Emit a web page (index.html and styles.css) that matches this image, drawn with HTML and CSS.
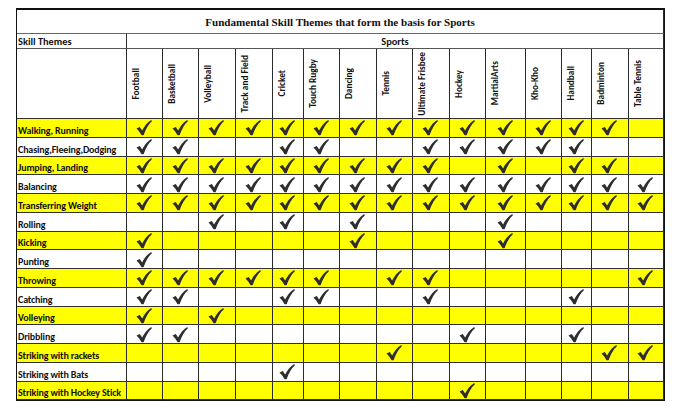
FILE: index.html
```html
<!DOCTYPE html>
<html>
<head>
<meta charset="utf-8">
<title>Fundamental Skill Themes</title>
<link rel="stylesheet" href="styles.css">
</head>
<body>
<svg class="defs" width="0" height="0" aria-hidden="true">
  <symbol id="ck" viewBox="0 0 16 16">
    <path d="M0.5,9.1 C1.5,8.3 2.6,7.8 3.8,7.4 L6.1,10.9 C8.3,6.6 11.3,2.8 15.3,0.4 L15.9,1.7 C12.5,4.8 9.8,9.5 7.7,15.5 C7.0,15.8 6.0,15.8 5.4,15.5 C4.1,13.2 2.5,11 0.5,9.1 Z"/>
  </symbol>
</svg>
<div class="sheet">
  <div class="c title">Fundamental Skill Themes that form the basis for Sports</div>
  <div class="c skill-head">Skill Themes</div>
  <div class="c sports-head">Sports</div>
  <div class="c blank"></div>
  <div class="c sport"><span class="vt">Football</span></div>
  <div class="c sport"><span class="vt">Basketball</span></div>
  <div class="c sport"><span class="vt">Volleyball</span></div>
  <div class="c sport"><span class="vt">Track and Field</span></div>
  <div class="c sport"><span class="vt">Cricket</span></div>
  <div class="c sport"><span class="vt">Touch Rugby</span></div>
  <div class="c sport"><span class="vt">Dancing</span></div>
  <div class="c sport"><span class="vt">Tennis</span></div>
  <div class="c sport"><span class="vt">Ultimate Frisbee</span></div>
  <div class="c sport"><span class="vt">Hockey</span></div>
  <div class="c sport"><span class="vt">MartialArts</span></div>
  <div class="c sport"><span class="vt">Kho-Kho</span></div>
  <div class="c sport"><span class="vt">Handball</span></div>
  <div class="c sport"><span class="vt">Badminton</span></div>
  <div class="c sport"><span class="vt">Table Tennis</span></div>

  <div class="row y">
    <div class="c lab">Walking, Running</div>
    <div class="c k"><svg><use href="#ck"/></svg></div>
    <div class="c k"><svg><use href="#ck"/></svg></div>
    <div class="c k"><svg><use href="#ck"/></svg></div>
    <div class="c k"><svg><use href="#ck"/></svg></div>
    <div class="c k"><svg><use href="#ck"/></svg></div>
    <div class="c k"><svg><use href="#ck"/></svg></div>
    <div class="c k"><svg><use href="#ck"/></svg></div>
    <div class="c k"><svg><use href="#ck"/></svg></div>
    <div class="c k"><svg><use href="#ck"/></svg></div>
    <div class="c k"><svg><use href="#ck"/></svg></div>
    <div class="c k"><svg><use href="#ck"/></svg></div>
    <div class="c k"><svg><use href="#ck"/></svg></div>
    <div class="c k"><svg><use href="#ck"/></svg></div>
    <div class="c k"><svg><use href="#ck"/></svg></div>
    <div class="c k"></div>
  </div>

  <div class="row">
    <div class="c lab">Chasing,Fleeing,Dodging</div>
    <div class="c k"><svg><use href="#ck"/></svg></div>
    <div class="c k"><svg><use href="#ck"/></svg></div>
    <div class="c k"></div>
    <div class="c k"></div>
    <div class="c k"><svg><use href="#ck"/></svg></div>
    <div class="c k"><svg><use href="#ck"/></svg></div>
    <div class="c k"></div>
    <div class="c k"></div>
    <div class="c k"><svg><use href="#ck"/></svg></div>
    <div class="c k"><svg><use href="#ck"/></svg></div>
    <div class="c k"><svg><use href="#ck"/></svg></div>
    <div class="c k"><svg><use href="#ck"/></svg></div>
    <div class="c k"><svg><use href="#ck"/></svg></div>
    <div class="c k"></div>
    <div class="c k"></div>
  </div>

  <div class="row y">
    <div class="c lab">Jumping, Landing</div>
    <div class="c k"><svg><use href="#ck"/></svg></div>
    <div class="c k"><svg><use href="#ck"/></svg></div>
    <div class="c k"><svg><use href="#ck"/></svg></div>
    <div class="c k"><svg><use href="#ck"/></svg></div>
    <div class="c k"><svg><use href="#ck"/></svg></div>
    <div class="c k"><svg><use href="#ck"/></svg></div>
    <div class="c k"><svg><use href="#ck"/></svg></div>
    <div class="c k"><svg><use href="#ck"/></svg></div>
    <div class="c k"><svg><use href="#ck"/></svg></div>
    <div class="c k"></div>
    <div class="c k"><svg><use href="#ck"/></svg></div>
    <div class="c k"></div>
    <div class="c k"><svg><use href="#ck"/></svg></div>
    <div class="c k"><svg><use href="#ck"/></svg></div>
    <div class="c k"></div>
  </div>

  <div class="row">
    <div class="c lab">Balancing</div>
    <div class="c k"><svg><use href="#ck"/></svg></div>
    <div class="c k"><svg><use href="#ck"/></svg></div>
    <div class="c k"><svg><use href="#ck"/></svg></div>
    <div class="c k"><svg><use href="#ck"/></svg></div>
    <div class="c k"><svg><use href="#ck"/></svg></div>
    <div class="c k"><svg><use href="#ck"/></svg></div>
    <div class="c k"><svg><use href="#ck"/></svg></div>
    <div class="c k"><svg><use href="#ck"/></svg></div>
    <div class="c k"><svg><use href="#ck"/></svg></div>
    <div class="c k"><svg><use href="#ck"/></svg></div>
    <div class="c k"><svg><use href="#ck"/></svg></div>
    <div class="c k"><svg><use href="#ck"/></svg></div>
    <div class="c k"><svg><use href="#ck"/></svg></div>
    <div class="c k"><svg><use href="#ck"/></svg></div>
    <div class="c k"><svg><use href="#ck"/></svg></div>
  </div>

  <div class="row y">
    <div class="c lab">Transferring Weight</div>
    <div class="c k"><svg><use href="#ck"/></svg></div>
    <div class="c k"><svg><use href="#ck"/></svg></div>
    <div class="c k"><svg><use href="#ck"/></svg></div>
    <div class="c k"><svg><use href="#ck"/></svg></div>
    <div class="c k"><svg><use href="#ck"/></svg></div>
    <div class="c k"><svg><use href="#ck"/></svg></div>
    <div class="c k"><svg><use href="#ck"/></svg></div>
    <div class="c k"><svg><use href="#ck"/></svg></div>
    <div class="c k"><svg><use href="#ck"/></svg></div>
    <div class="c k"><svg><use href="#ck"/></svg></div>
    <div class="c k"><svg><use href="#ck"/></svg></div>
    <div class="c k"><svg><use href="#ck"/></svg></div>
    <div class="c k"><svg><use href="#ck"/></svg></div>
    <div class="c k"><svg><use href="#ck"/></svg></div>
    <div class="c k"><svg><use href="#ck"/></svg></div>
  </div>

  <div class="row">
    <div class="c lab">Rolling</div>
    <div class="c k"></div>
    <div class="c k"></div>
    <div class="c k"><svg><use href="#ck"/></svg></div>
    <div class="c k"></div>
    <div class="c k"><svg><use href="#ck"/></svg></div>
    <div class="c k"></div>
    <div class="c k"><svg><use href="#ck"/></svg></div>
    <div class="c k"></div>
    <div class="c k"></div>
    <div class="c k"></div>
    <div class="c k"><svg><use href="#ck"/></svg></div>
    <div class="c k"></div>
    <div class="c k"></div>
    <div class="c k"></div>
    <div class="c k"></div>
  </div>

  <div class="row y">
    <div class="c lab">Kicking</div>
    <div class="c k"><svg><use href="#ck"/></svg></div>
    <div class="c k"></div>
    <div class="c k"></div>
    <div class="c k"></div>
    <div class="c k"></div>
    <div class="c k"></div>
    <div class="c k"><svg><use href="#ck"/></svg></div>
    <div class="c k"></div>
    <div class="c k"></div>
    <div class="c k"></div>
    <div class="c k"><svg><use href="#ck"/></svg></div>
    <div class="c k"></div>
    <div class="c k"></div>
    <div class="c k"></div>
    <div class="c k"></div>
  </div>

  <div class="row">
    <div class="c lab">Punting</div>
    <div class="c k"><svg><use href="#ck"/></svg></div>
    <div class="c k"></div>
    <div class="c k"></div>
    <div class="c k"></div>
    <div class="c k"></div>
    <div class="c k"></div>
    <div class="c k"></div>
    <div class="c k"></div>
    <div class="c k"></div>
    <div class="c k"></div>
    <div class="c k"></div>
    <div class="c k"></div>
    <div class="c k"></div>
    <div class="c k"></div>
    <div class="c k"></div>
  </div>

  <div class="row y">
    <div class="c lab">Throwing</div>
    <div class="c k"><svg><use href="#ck"/></svg></div>
    <div class="c k"><svg><use href="#ck"/></svg></div>
    <div class="c k"><svg><use href="#ck"/></svg></div>
    <div class="c k"><svg><use href="#ck"/></svg></div>
    <div class="c k"><svg><use href="#ck"/></svg></div>
    <div class="c k"><svg><use href="#ck"/></svg></div>
    <div class="c k"></div>
    <div class="c k"><svg><use href="#ck"/></svg></div>
    <div class="c k"><svg><use href="#ck"/></svg></div>
    <div class="c k"></div>
    <div class="c k"></div>
    <div class="c k"></div>
    <div class="c k"></div>
    <div class="c k"></div>
    <div class="c k"><svg><use href="#ck"/></svg></div>
  </div>

  <div class="row">
    <div class="c lab">Catching</div>
    <div class="c k"><svg><use href="#ck"/></svg></div>
    <div class="c k"><svg><use href="#ck"/></svg></div>
    <div class="c k"></div>
    <div class="c k"></div>
    <div class="c k"><svg><use href="#ck"/></svg></div>
    <div class="c k"><svg><use href="#ck"/></svg></div>
    <div class="c k"></div>
    <div class="c k"></div>
    <div class="c k"><svg><use href="#ck"/></svg></div>
    <div class="c k"></div>
    <div class="c k"></div>
    <div class="c k"></div>
    <div class="c k"><svg><use href="#ck"/></svg></div>
    <div class="c k"></div>
    <div class="c k"></div>
  </div>

  <div class="row y">
    <div class="c lab">Volleying</div>
    <div class="c k"><svg><use href="#ck"/></svg></div>
    <div class="c k"></div>
    <div class="c k"><svg><use href="#ck"/></svg></div>
    <div class="c k"></div>
    <div class="c k"></div>
    <div class="c k"></div>
    <div class="c k"></div>
    <div class="c k"></div>
    <div class="c k"></div>
    <div class="c k"></div>
    <div class="c k"></div>
    <div class="c k"></div>
    <div class="c k"></div>
    <div class="c k"></div>
    <div class="c k"></div>
  </div>

  <div class="row">
    <div class="c lab">Dribbling</div>
    <div class="c k"><svg><use href="#ck"/></svg></div>
    <div class="c k"><svg><use href="#ck"/></svg></div>
    <div class="c k"></div>
    <div class="c k"></div>
    <div class="c k"></div>
    <div class="c k"></div>
    <div class="c k"></div>
    <div class="c k"></div>
    <div class="c k"></div>
    <div class="c k"><svg><use href="#ck"/></svg></div>
    <div class="c k"></div>
    <div class="c k"></div>
    <div class="c k"><svg><use href="#ck"/></svg></div>
    <div class="c k"></div>
    <div class="c k"></div>
  </div>

  <div class="row y">
    <div class="c lab">Striking with rackets</div>
    <div class="c k"></div>
    <div class="c k"></div>
    <div class="c k"></div>
    <div class="c k"></div>
    <div class="c k"></div>
    <div class="c k"></div>
    <div class="c k"></div>
    <div class="c k"><svg><use href="#ck"/></svg></div>
    <div class="c k"></div>
    <div class="c k"></div>
    <div class="c k"></div>
    <div class="c k"></div>
    <div class="c k"></div>
    <div class="c k"><svg><use href="#ck"/></svg></div>
    <div class="c k"><svg><use href="#ck"/></svg></div>
  </div>

  <div class="row">
    <div class="c lab">Striking with Bats</div>
    <div class="c k"></div>
    <div class="c k"></div>
    <div class="c k"></div>
    <div class="c k"></div>
    <div class="c k"><svg><use href="#ck"/></svg></div>
    <div class="c k"></div>
    <div class="c k"></div>
    <div class="c k"></div>
    <div class="c k"></div>
    <div class="c k"></div>
    <div class="c k"></div>
    <div class="c k"></div>
    <div class="c k"></div>
    <div class="c k"></div>
    <div class="c k"></div>
  </div>

  <div class="row y">
    <div class="c lab">Striking with Hockey Stick</div>
    <div class="c k"></div>
    <div class="c k"></div>
    <div class="c k"></div>
    <div class="c k"></div>
    <div class="c k"></div>
    <div class="c k"></div>
    <div class="c k"></div>
    <div class="c k"></div>
    <div class="c k"></div>
    <div class="c k"><svg><use href="#ck"/></svg></div>
    <div class="c k"></div>
    <div class="c k"></div>
    <div class="c k"></div>
    <div class="c k"></div>
    <div class="c k"></div>
  </div>
</div>
</body>
</html>
```
FILE: styles.css
```css
html, body {
  margin: 0;
  background: #ffffff;
}
body {
  padding: 8px 0 0 16px;
  font-family: Carlito, Lato, "Liberation Sans", sans-serif;
  font-weight: bold;
  color: #111;
}
.defs {
  position: absolute;
  width: 0;
  height: 0;
  overflow: hidden;
}
.sheet {
  display: inline-grid;
  grid-template-columns: 110px 36px 36px 37px 37px 31px 36px 37px 36px 37px 36px 40px 36px 30px 37px 35px;
  grid-template-rows: 24px 15px 70px repeat(15, 18.75px);
  border-top: 2px solid #111;
  border-left: 1px solid #111;
  border-right: 1px solid #111;
  border-bottom: 1px solid #111;
}
.row {
  display: contents;
}
.c {
  box-sizing: border-box;
  border-right: 1px solid #2b2b2b;
  border-bottom: 1px solid #333;
  min-width: 0;
  overflow: visible;
}
.y > .c {
  background: #ffff00;
}
.title {
  grid-column: 1 / -1;
  display: flex;
  align-items: center;
  justify-content: center;
  font-family: "Liberation Serif", "Times New Roman", serif;
  font-size: 11.1px;
  border-bottom-color: #666;
  padding-top: 1px;
}
.skill-head {
  display: flex;
  align-items: flex-end;
  padding: 0 0 0 1px;
  font-size: 10.4px;
  line-height: 13px;
  border-bottom-color: #555;
}
.sports-head {
  grid-column: 2 / -1;
  display: flex;
  align-items: flex-end;
  justify-content: center;
  font-size: 10.4px;
  line-height: 13px;
  border-bottom-color: #555;
}
.sport {
  display: flex;
  align-items: center;
  justify-content: flex-start;
  padding-left: 3px;
}
.vt {
  writing-mode: vertical-rl;
  transform: rotate(180deg);
  font-size: 9.3px;
  line-height: 11px;
  white-space: nowrap;
}
.lab {
  display: flex;
  align-items: flex-end;
  padding: 0 0 0 1px;
  font-size: 10px;
  letter-spacing: -0.15px;
  line-height: 13px;
  white-space: nowrap;
}
.k {
  display: flex;
  align-items: center;
  justify-content: center;
  padding-right: 2px;
}
.k svg {
  width: 16px;
  height: 17px;
  fill: #2e2e2e;
}
```
